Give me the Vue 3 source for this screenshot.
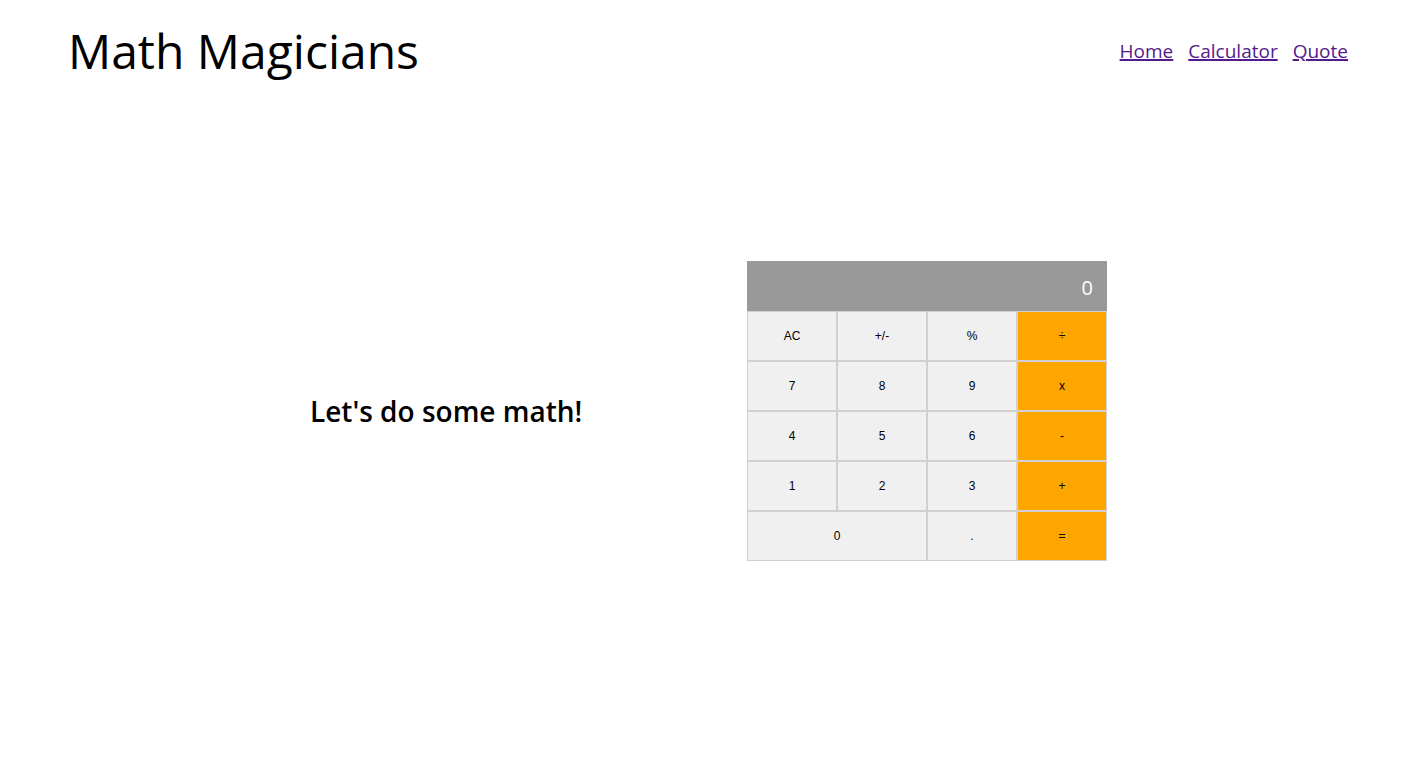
<script setup>
import { ref } from 'vue'

const links = ['Home', 'Calculator', 'Quote']
const keys = ['AC', '+/-', '%', '÷', '7', '8', '9', 'x', '4', '5', '6', '-', '1', '2', '3', '+', '0', '.', '=']
const operators = ['÷', 'x', '-', '+', '=']

const display = ref('0')
const stored = ref(null)
const pending = ref(null)
const fresh = ref(true)

function compute(a, b, op) {
  if (op === '+') return a + b
  if (op === '-') return a - b
  if (op === 'x') return a * b
  return a / b
}

function press(key) {
  if (key === 'AC') {
    display.value = '0'
    stored.value = null
    pending.value = null
    fresh.value = true
  } else if (key === '+/-') {
    display.value = String(-Number(display.value))
  } else if (key === '%') {
    display.value = String(Number(display.value) / 100)
  } else if (operators.includes(key)) {
    if (pending.value && !fresh.value) {
      display.value = String(compute(stored.value, Number(display.value), pending.value))
    }
    stored.value = Number(display.value)
    pending.value = key === '=' ? null : key
    fresh.value = true
  } else if (fresh.value) {
    display.value = key === '.' ? '0.' : key
    fresh.value = false
  } else if (key !== '.' || !display.value.includes('.')) {
    display.value += key
  }
}
</script>

<template>
  <div class="page">
    <header class="header">
      <h1 class="title">Math Magicians</h1>
      <nav class="nav">
        <a v-for="link in links" :key="link" href="#" class="link">{{ link }}</a>
      </nav>
    </header>
    <main class="main">
      <h2 class="tagline">Let's do some math!</h2>
      <section class="calculator" aria-label="Calculator">
        <output class="display">{{ display }}</output>
        <button
          v-for="key in keys"
          :key="key"
          type="button"
          class="key"
          :class="{ operator: operators.includes(key), wide: key === '0' }"
          @click="press(key)"
        >{{ key }}</button>
      </section>
    </main>
  </div>
</template>

<style>
body {
  margin: 0;
  background: #fff;
}
</style>

<style scoped>
.page {
  box-sizing: border-box;
  min-height: 100vh;
  display: flex;
  flex-direction: column;
  font-family: "Segoe UI", "Open Sans", "Noto Sans", sans-serif;
  color: #000;
}
.header {
  display: flex;
  justify-content: space-between;
  align-items: center;
  padding: 16px 73px 16px 68px;
}
.title {
  margin: 0;
  font-size: 48px;
  line-height: 69px;
  font-weight: 400;
}
.nav {
  display: flex;
  gap: 15px;
}
.link {
  color: #551a8b;
  font-size: 19px;
  line-height: 28px;
  font-weight: 400;
  text-decoration-thickness: 2px;
}
.main {
  display: grid;
  grid-template-columns: 274px 360px;
  justify-content: center;
  align-items: center;
  column-gap: 163px;
  padding: 160px 4px 0 0;
}
.tagline {
  margin: 0;
  font-size: 28px;
  line-height: 41px;
  font-weight: 600;
  white-space: nowrap;
}
.calculator {
  display: grid;
  grid-template-columns: repeat(4, 1fr);
  grid-auto-rows: 50px;
}
.display {
  grid-column: 1 / -1;
  padding: 13px 14px 9px;
  background: #999;
  color: #fff;
  font-size: 20px;
  line-height: 28px;
  text-align: right;
}
.key {
  margin: 0;
  padding: 0;
  border: 1px solid #d0d0d0;
  background: #f0f0f0;
  color: #000;
  font-family: "Liberation Sans", Arial, sans-serif;
  font-size: 12px;
}
.operator {
  background: #ffa500;
}
.wide {
  grid-column: span 2;
}
</style>
